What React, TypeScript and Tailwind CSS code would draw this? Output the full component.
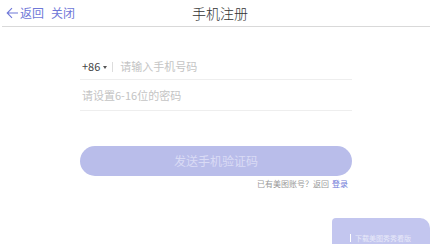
const font = "font-['Noto_Sans_CJK_SC','Noto_Sans',sans-serif]"

export default function App() {
  return (
    <div className={`relative h-[244px] w-[442px] overflow-hidden bg-white ${font}`}>
      {/* header */}
      <div className="mx-[2px] flex h-[27px] w-[428px] items-center border-b border-[#d9d9d9] pl-[4px]">
        <div className="flex w-[140px] items-center gap-[7px] text-[12px] leading-none text-[#6f78d8]">
          <span className="flex items-center gap-[1px]">
            <svg width="13" height="12" viewBox="0 0 13 12" fill="none" stroke="#6f78d8" strokeWidth="1.1">
              <path d="M12 6H1.5M6 1.2L1.2 6 6 10.8" />
            </svg>
            返回
          </span>
          <span>关闭</span>
        </div>
        <div className="w-[148px] text-center text-[14px] font-light leading-none text-[#333]">手机注册</div>
      </div>

      {/* form */}
      <div className="ml-[80px] mt-[27px] w-[272px]">
        <div className="flex h-[26px] items-center border-b border-[#eeeeee] pl-[2px] text-[11px]">
          <span className="text-[#444]">+86</span>
          <span className="ml-[3px] mt-[1px] h-0 w-0 border-x-[2px] border-t-[3px] border-x-transparent border-t-[#555]" />
          <span className="ml-[5px] h-[10px] w-px bg-[#ddd]" />
          <span className="ml-[7px] text-[#c4c4c4]">请输入手机号码</span>
        </div>
        <div className="flex h-[31px] items-center border-b border-[#eeeeee] pl-[2px] text-[11px] text-[#c4c4c4]">
          请设置6-16位的密码
        </div>

        <div className="mt-[35px] flex h-[30px] items-center justify-center rounded-full bg-[#b9bdea] text-[12px] text-[#d9dbf5]">
          发送手机验证码
        </div>
        <div className="mt-[4px] flex justify-end pr-[4px] text-[8px] leading-none text-[#999]">
          已有美图账号？返回<span className="ml-[3px] text-[#6f78d8]">登录</span>
        </div>
      </div>

      {/* watermark */}
      <div className="absolute bottom-0 right-[12px] flex h-[26px] w-[98px] items-end rounded-tl-[4px] rounded-tr-[10px] bg-[#c3c6ef] pb-[2px] pl-[18px] text-[7px] leading-none text-[#e8e9f9]">
        <span className="mr-[4px] h-[8px] w-px bg-white" />
        下载美图秀秀看版
      </div>
    </div>
  )
}
